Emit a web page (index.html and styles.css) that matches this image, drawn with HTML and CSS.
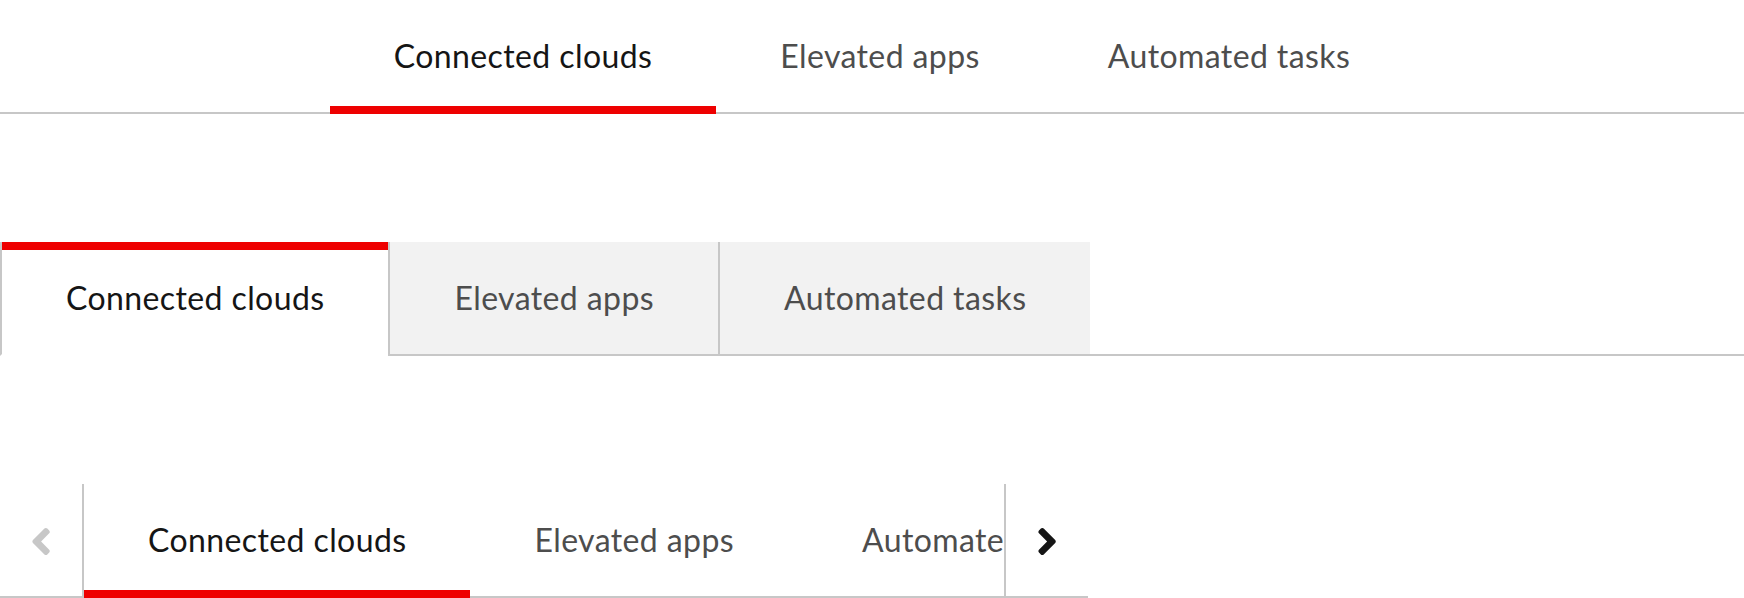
FILE: index.html
```html
<!DOCTYPE html>
<html lang="en">
<head>
<meta charset="utf-8">
<title>Tabs</title>
<link rel="stylesheet" href="styles.css">
</head>
<body>
  <div class="tabs tabs-center">
    <div class="tab current">Connected clouds</div>
    <div class="tab">Elevated apps</div>
    <div class="tab">Automated tasks</div>
  </div>

  <div class="tabs tabs-box">
    <div class="box-tab current">Connected clouds</div>
    <div class="box-tab">Elevated apps</div>
    <div class="box-tab">Automated tasks</div>
    <div class="box-fill"></div>
  </div>

  <div class="tabs tabs-scroll">
    <div class="scroll-btn scroll-left disabled">
      <svg class="chev" viewBox="22 96 210 320" width="18" height="27" aria-hidden="true"><path d="M31.7 239l136-136c9.4-9.4 24.6-9.4 33.9 0l22.6 22.6c9.4 9.4 9.4 24.6 0 33.9L127.9 256l96.4 96.4c9.4 9.4 9.4 24.6 0 33.9L201.7 409c-9.4 9.4-24.6 9.4-33.9 0l-136-136c-9.5-9.4-9.5-24.6-.1-34z"/></svg>
    </div>
    <div class="scroll-view">
      <div class="tab current">Connected clouds</div>
      <div class="tab">Elevated apps</div>
      <div class="tab">Automated tasks</div>
    </div>
    <div class="scroll-btn scroll-right">
      <svg class="chev" viewBox="22 96 210 320" width="18" height="27" aria-hidden="true"><path d="M224.3 273l-136 136c-9.4 9.4-24.6 9.4-33.9 0l-22.6-22.6c-9.4-9.4-9.4-24.6 0-33.9l96.4-96.4-96.4-96.4c-9.4-9.4-9.4-24.6 0-33.9L54.3 103c9.4-9.4 24.6-9.4 33.9 0l136 136c9.5 9.4 9.5 24.6.1 34z"/></svg>
    </div>
  </div>
</body>
</html>
```

FILE: styles.css
```css
* { box-sizing: border-box; }

body {
  margin: 0;
  background: #fff;
  font-family: Lato, "Noto Sans", sans-serif;
  font-size: 32px;
  letter-spacing: 0.4px;
  color: #4d4d4d;
}

.tabs {
  display: flex;
  height: 114px;
}

/* line under the tab row */
.tabs-center,
.scroll-view,
.scroll-btn {
  background: linear-gradient(#c7c7c7, #c7c7c7) left bottom / 100% 2px no-repeat;
}

.tabs-center {
  justify-content: center;
}

.tab {
  position: relative;
  flex-shrink: 0;
  padding: 32px 64px 34px;
  line-height: 48px;
  white-space: nowrap;
  color: #4d4d4d;
}

.tab.current {
  color: #151515;
}

.tab.current::after {
  content: "";
  position: absolute;
  left: 0;
  right: 0;
  bottom: 0;
  height: 8px;
  background: #ee0000;
}

/* box variant */
.tabs-box {
  margin-top: 128px;
}

.box-tab {
  position: relative;
  flex-shrink: 0;
  padding: 32px 64px;
  line-height: 48px;
  white-space: nowrap;
  background: #f2f2f2;
  border-left: 2px solid #c7c7c7;
  border-bottom: 2px solid #c7c7c7;
  color: #4d4d4d;
}

.box-tab.current {
  background: #fff;
  color: #151515;
  border-bottom-color: #fff;
}

.box-tab.current::before {
  content: "";
  position: absolute;
  left: 0;
  right: 0;
  top: 0;
  height: 8px;
  background: #ee0000;
}

.box-fill {
  flex: 1;
  border-bottom: 2px solid #c7c7c7;
}

/* scrollable variant */
.tabs-scroll {
  margin-top: 128px;
  width: 1088px;
}

.scroll-btn {
  width: 84px;
  flex-shrink: 0;
  display: flex;
  align-items: center;
  justify-content: center;
}

.scroll-left {
  border-right: 2px solid #c7c7c7;
}

.scroll-right {
  border-left: 2px solid #c7c7c7;
}

.chev {
  display: block;
  fill: #151515;
}

.scroll-btn.disabled .chev {
  fill: #c7c7c7;
}

.scroll-view {
  flex: 1;
  display: flex;
  overflow: hidden;
}
```
